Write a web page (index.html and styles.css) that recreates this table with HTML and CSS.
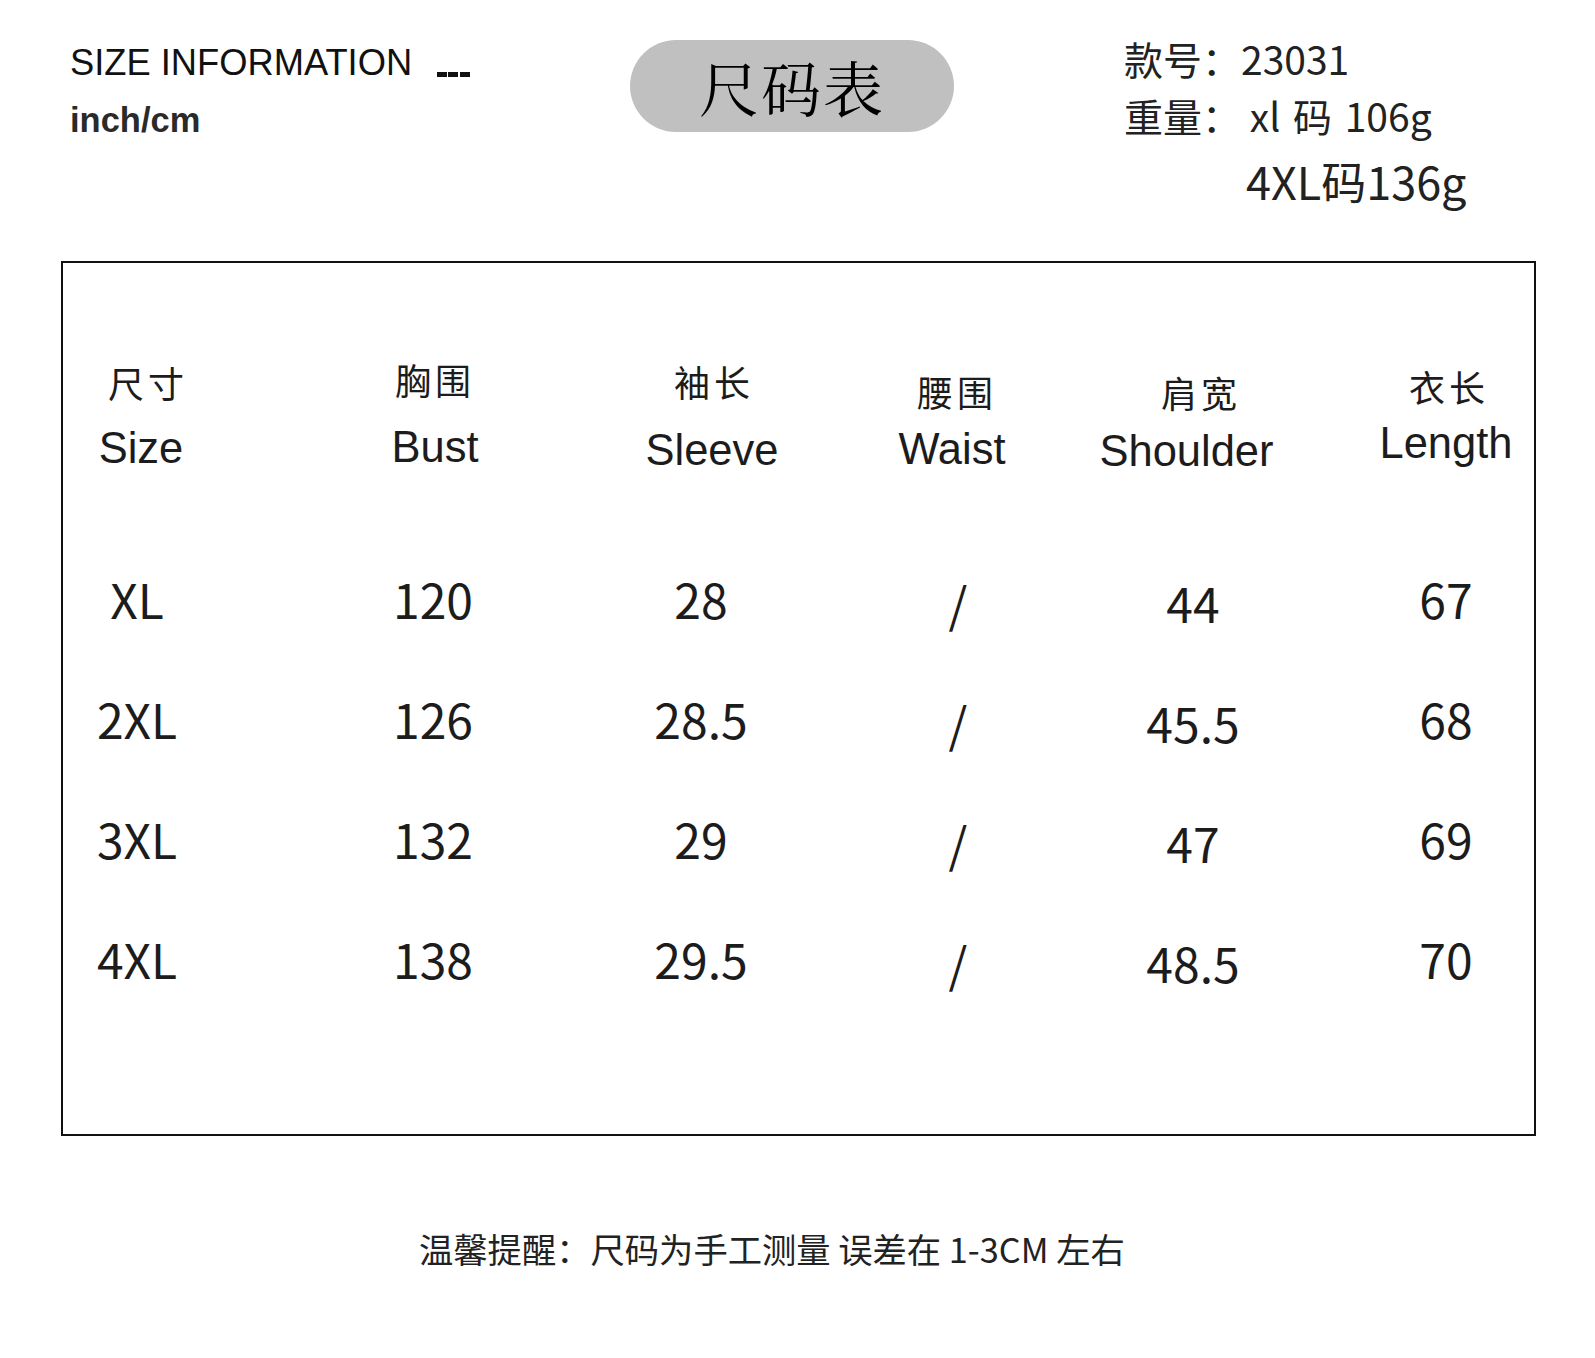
FILE: index.html
```html
<!DOCTYPE html>
<html lang="zh-CN">
<head>
<meta charset="utf-8">
<title>尺码表</title>
<link rel="stylesheet" href="styles.css">
</head>
<body>
<div class="page">
  <header class="top">
    <div class="intro">
      <div class="intro-title">SIZE INFORMATION<span class="dashes"></span></div>
      <div class="intro-unit">inch/cm</div>
    </div>
    <div class="pill">尺码表</div>
    <div class="meta">
      <div class="meta-row">款号：23031</div>
      <div class="meta-row meta-weight">重量： <span class="meta-val">xl 码 106g</span></div>
      <div class="meta-row meta-weight2">4XL码136g</div>
    </div>
  </header>

  <section class="chart">
    <div class="chart-head">
      <div class="col c1 h1"><div class="zh">尺寸</div><div class="en">Size</div></div>
      <div class="col c2 h2"><div class="zh">胸围</div><div class="en">Bust</div></div>
      <div class="col c3 h3"><div class="zh">袖长</div><div class="en">Sleeve</div></div>
      <div class="col c4 h4"><div class="zh">腰围</div><div class="en">Waist</div></div>
      <div class="col c5 h5"><div class="zh">肩宽</div><div class="en">Shoulder</div></div>
      <div class="col c6 h6"><div class="zh">衣长</div><div class="en">Length</div></div>
    </div>
    <div class="chart-body">
      <div class="chart-row">
        <div class="col c1 val">XL</div>
        <div class="col c2 val">120</div>
        <div class="col c3 val">28</div>
        <div class="col c4 val slash">/</div>
        <div class="col c5 val low">44</div>
        <div class="col c6 val">67</div>
      </div>
      <div class="chart-row">
        <div class="col c1 val">2XL</div>
        <div class="col c2 val">126</div>
        <div class="col c3 val">28.5</div>
        <div class="col c4 val slash">/</div>
        <div class="col c5 val low">45.5</div>
        <div class="col c6 val">68</div>
      </div>
      <div class="chart-row">
        <div class="col c1 val">3XL</div>
        <div class="col c2 val">132</div>
        <div class="col c3 val">29</div>
        <div class="col c4 val slash">/</div>
        <div class="col c5 val low">47</div>
        <div class="col c6 val">69</div>
      </div>
      <div class="chart-row">
        <div class="col c1 val">4XL</div>
        <div class="col c2 val">138</div>
        <div class="col c3 val">29.5</div>
        <div class="col c4 val slash">/</div>
        <div class="col c5 val low">48.5</div>
        <div class="col c6 val">70</div>
      </div>
    </div>
  </section>

  <p class="note">温馨提醒：尺码为手工测量 误差在 1-3CM 左右</p>
</div>
</body>
</html>
```

FILE: styles.css
```css
html, body {
  margin: 0;
  padding: 0;
  background: #ffffff;
}

.page {
  width: 1595px;
  height: 1358px;
  overflow: hidden;
  background: #ffffff;
}

/* ---------- top header ---------- */
.top {
  display: flex;
  align-items: flex-start;
  padding-top: 36px;
}

.intro {
  margin-left: 70px;
  width: 560px;
  padding-top: 8.5px;
}

.intro-title {
  font-family: "Liberation Sans", Arial, sans-serif;
  font-size: 36.3px;
  line-height: 36px;
  color: #111111;
  white-space: nowrap;
}

.dashes {
  display: inline-block;
  width: 33px;
  height: 5px;
  margin-left: 25px;
  vertical-align: -2px;
  background: linear-gradient(to right,
    #111 0 10px, transparent 10px 11.5px,
    #111 11.5px 21.5px, transparent 21.5px 23px,
    #111 23px 33px);
}

.intro-unit {
  margin-top: 22.7px;
  font-family: "Liberation Sans", Arial, sans-serif;
  font-weight: bold;
  font-size: 34.5px;
  line-height: 34px;
  color: #2a2a2a;
}

.pill {
  width: 324px;
  height: 92px;
  margin-top: 4px;
  border-radius: 46px;
  background: #c0c0c0;
  display: flex;
  align-items: center;
  justify-content: center;
  font-family: "Noto Serif CJK SC", "Noto Sans CJK SC", serif;
  font-size: 60px;
  line-height: 92px;
  letter-spacing: 2px;
  color: #000000;
}

.meta {
  margin-left: 170px;
  padding-top: 2px;
  font-family: "Noto Sans CJK SC", "Noto Sans", sans-serif;
  color: #222222;
  white-space: nowrap;
}

.meta-row {
  font-size: 39px;
  line-height: 40px;
}

.meta-weight {
  margin-top: 17px;
}

.meta-val {
  font-size: 39px;
  word-spacing: 4px;
}

.meta-weight2 {
  margin-top: 23px;
  padding-left: 122px;
  font-size: 45px;
  line-height: 45px;
}

/* ---------- chart ---------- */
.chart {
  box-sizing: border-box;
  width: 1475px;
  height: 875px;
  margin: 58px 0 0 61px;
  padding-top: 98px;
  border: 2px solid #111111;
}

.chart-head,
.chart-row {
  display: flex;
  align-items: flex-start;
}

.chart-head {
  height: 113px;
}

.col {
  box-sizing: border-box;
  flex: none;
  text-align: center;
  white-space: nowrap;
  color: #1c1c1c;
}

.c1 { width: 148px; }
.c2 { width: 200px; margin-left: 122px; }
.c3 { width: 200px; margin-left: 68px; }
.c4 { width: 200px; margin-left: 54px; }
.c5 { width: 200px; margin-left: 38px; }
.c6 { width: 176px; margin-left: 65px; }

.zh {
  font-family: "Noto Sans CJK SC", sans-serif;
  font-size: 36px;
  line-height: 36px;
  letter-spacing: 4px;
  padding-left: 4px;
}

.en {
  font-family: "Liberation Sans", Arial, sans-serif;
  font-size: 43.5px;
  line-height: 43px;
}

.h1 { padding-top: 3px; }
.h1 .zh { padding-left: 22px; }
.h1 .en { margin-top: 26.5px; padding-left: 8px; }
.h2 .en { margin-top: 28.5px; padding-left: 4px; }
.h3 { padding-top: 2px; }
.h3 .zh { padding-left: 26px; }
.h3 .en { margin-top: 29.5px; padding-left: 22px; }
.h4 { padding-top: 12px; }
.h4 .en { margin-top: 18.5px; padding-right: 6px; }
.h5 { padding-top: 13px; }
.h5 .zh { padding-left: 16px; }
.h5 .en { margin-top: 19.5px; padding-right: 13px; }
.h6 { padding-top: 7px; }
.h6 .zh { padding-left: 6px; }
.h6 .en { margin-top: 17.5px; }

.chart-body {
  margin-top: 63.5px;
}

.chart-row {
  height: 120px;
}

.val {
  font-family: "Noto Sans CJK SC", "Noto Sans", sans-serif;
  font-size: 48px;
  line-height: 120px;
}

.low {
  padding-top: 4px;
}

.slash {
  padding-top: 4px;
  padding-left: 6px;
}

/* ---------- note ---------- */
.note {
  margin: 95px 0 0 419px;
  font-family: "Noto Sans CJK SC", sans-serif;
  font-size: 34.3px;
  line-height: 34px;
  color: #222222;
  white-space: nowrap;
}
```
